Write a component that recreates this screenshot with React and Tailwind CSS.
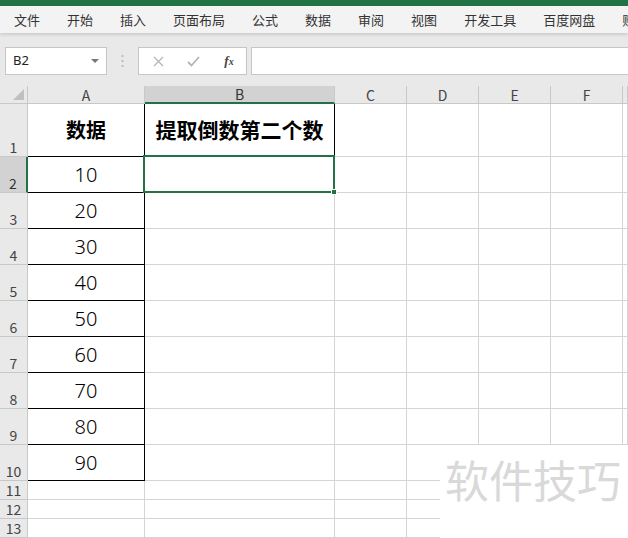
import React from "react";

const menu = ["文件", "开始", "插入", "页面布局", "公式", "数据", "审阅", "视图", "开发工具", "百度网盘", "账"];
const cols = [
  { l: "A", w: 117 },
  { l: "B", w: 190 },
  { l: "C", w: 72 },
  { l: "D", w: 72 },
  { l: "E", w: 72 },
  { l: "F", w: 72 },
  { l: "", w: 5 },
];
const rowHeights = [53, 36, 36, 36, 36, 36, 36, 36, 36, 36, 19, 19, 19, 19];
const aVals = ["数据", "10", "20", "30", "40", "50", "60", "70", "80", "90"];

const cjk = { fontFamily: '"Noto Sans CJK SC", "Noto Sans", sans-serif' };

export default function App() {
  return (
    <div className="w-[628px] h-[538px] overflow-hidden bg-white relative" style={cjk}>
      <div className="h-[6px] bg-[#217346]" />
      <div className="h-[27px] bg-[#f3f3f3] flex items-center pl-[14px] gap-[27px] text-[13px] text-[#333] whitespace-nowrap shadow-[0_2px_3px_rgba(0,0,0,0.12)] relative z-10">
        {menu.map((m) => (
          <span key={m}>{m}</span>
        ))}
      </div>
      <div className="h-[53px] bg-[#e9e9e9] flex items-start pt-[14px] pl-[5px]">
        <div className="w-[102px] h-[28px] bg-white border border-[#c6c6c6] flex items-center justify-between pl-[7px] pr-[7px]">
          <span className="text-[13px] text-[#222]" style={{ fontFamily: '"Noto Sans", sans-serif' }}>B2</span>
          <svg width="8" height="5" viewBox="0 0 8 5"><path d="M0 0 L8 0 L4 4 Z" fill="#777" /></svg>
        </div>
        <div className="w-[31px] h-[28px] flex items-center justify-center">
          <svg width="3" height="12" viewBox="0 0 3 12">
            <rect x="0.5" y="0" width="2" height="2" fill="#bdbdbd" />
            <rect x="0.5" y="5" width="2" height="2" fill="#bdbdbd" />
            <rect x="0.5" y="10" width="2" height="2" fill="#bdbdbd" />
          </svg>
        </div>
        <div className="w-[109px] h-[28px] bg-white border border-[#c6c6c6] flex items-center">
          <div className="w-[36px] flex justify-center pl-[3px]">
            <svg width="11" height="11" viewBox="0 0 11 11"><path d="M1 1 L10 10 M10 1 L1 10" stroke="#b5b5b5" strokeWidth="1.3" /></svg>
          </div>
          <div className="w-[37px] flex justify-center">
            <svg width="13" height="11" viewBox="0 0 13 11"><path d="M1 6 L4.5 9.5 L12 1" stroke="#b5b5b5" strokeWidth="1.8" fill="none" /></svg>
          </div>
          <div className="w-[34px] flex justify-center">
            <span className="text-[13px] italic text-[#444] font-bold" style={{ fontFamily: '"Liberation Serif", serif' }}>
              f<span className="text-[10px]">x</span>
            </span>
          </div>
        </div>
        <div className="ml-[4px] flex-1 h-[28px] bg-white border border-[#c6c6c6] border-r-0" />
      </div>

      {/* Grid */}
      <div
        className="grid text-[#444]"
        style={{
          gridTemplateColumns: `28px ${cols.map((c) => c.w + "px").join(" ")}`,
          gridTemplateRows: `18px ${rowHeights.map((h) => h + "px").join(" ")}`,
        }}
      >
        <div className="bg-[#e9e9e9] border-r border-b border-[#c8c8c8] relative">
          <svg className="absolute right-[3px] bottom-[3px]" width="11" height="11" viewBox="0 0 11 11"><path d="M11 0 L11 11 L0 11 Z" fill="#c0c0c0" /></svg>
        </div>
        {cols.map((c) =>
          c.l === "B" ? (
            <div key={c.l} className="bg-[#d2d2d2] border-r border-[#c8c8c8] border-b-2 border-b-[#217346] flex items-center justify-center text-[14px] leading-none text-[#333]">
              {c.l}
            </div>
          ) : (
            <div key={c.l + "h"} className="bg-[#e9e9e9] border-r border-b border-[#c8c8c8] flex items-center justify-center text-[14px] leading-none text-[#444]">
              {c.l}
            </div>
          )
        )}

        {rowHeights.map((h, ri) => {
          const r = ri + 1;
          const cells = [];
          cells.push(
            <div
              key={"rh" + r}
              className={
                r === 2
                  ? "bg-[#d2d2d2] border-b border-[#c8c8c8] border-r-2 border-r-[#217346] flex items-end justify-center text-[14px] leading-[17px] text-[#333]"
                  : "bg-[#e9e9e9] border-r border-b border-[#c8c8c8] flex items-end justify-center text-[14px] leading-[17px] text-[#444]"
              }
            >
              {r <= 13 ? r : ""}
            </div>
          );
          cols.forEach((c) => {
            const key = c.l + r;
            if (c.l === "A" && r <= 10) {
              cells.push(
                <div key={key} className="border-r border-b border-black flex items-center justify-center text-black">
                  {r === 1 ? (
                    <span className="text-[20px] font-bold">{aVals[0]}</span>
                  ) : (
                    <span className="text-[20px]" style={{ fontFamily: '"Noto Sans", sans-serif', fontWeight: 300 }}>{aVals[r - 1]}</span>
                  )}
                </div>
              );
            } else if (c.l === "B" && r === 1) {
              cells.push(
                <div key={key} className="border-r border-b border-black flex items-center justify-center text-black">
                  <span className="text-[21px] font-bold">提取倒数第二个数</span>
                </div>
              );
            } else if (c.l === "B" && r === 2) {
              cells.push(
                <div key={key} className="border-r border-b border-[#d4d4d4] relative">
                  <div className="absolute -left-[2px] -top-[2px] -right-[1px] -bottom-[1px] border-2 border-[#217346]" />
                  <div className="absolute -right-[3px] -bottom-[3px] w-[6px] h-[6px] bg-[#217346] border border-white" />
                </div>
              );
            } else {
              cells.push(<div key={key} className="border-r border-b border-[#d4d4d4]" />);
            }
          });
          return cells;
        })}
      </div>

      <div className="absolute left-[440px] top-[445px] right-0 bottom-0 bg-white flex items-start pl-[5px] pt-[12px]">
        <span className="text-[44px] leading-none text-[#d9d9d9] whitespace-nowrap">软件技巧</span>
      </div>
    </div>
  );
}
